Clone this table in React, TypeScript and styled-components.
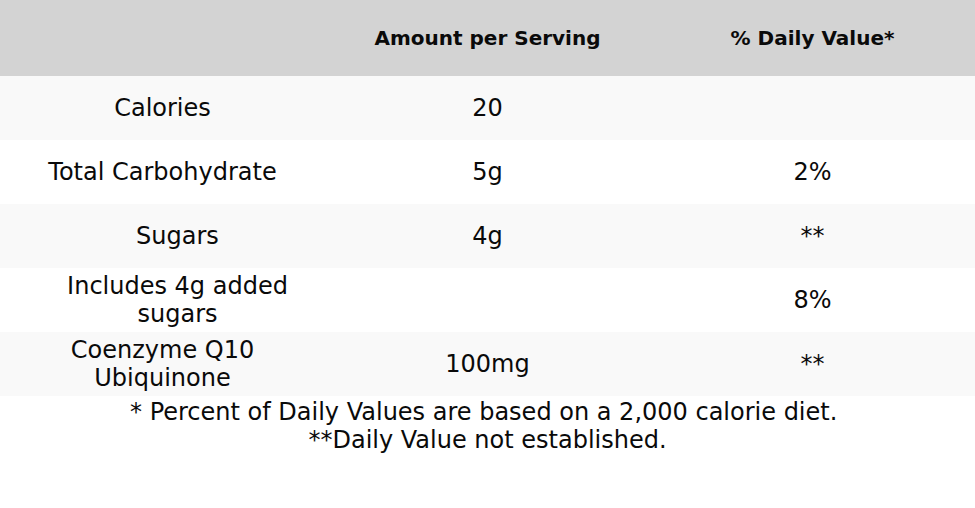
import styled, { createGlobalStyle } from 'styled-components'

const GlobalStyle = createGlobalStyle`
  html, body {
    margin: 0;
    padding: 0;
    background: #ffffff;
  }
  body {
    font-family: 'DejaVu Sans', 'Liberation Sans', sans-serif;
    color: #0a0a0a;
  }
`

const Table = styled.table`
  width: 975px;
  border-collapse: collapse;
  table-layout: fixed;
`

const HeadCell = styled.th`
  height: 76px;
  padding: 0 8px;
  background: #d3d3d3;
  font-size: 20px;
  font-weight: 700;
  text-align: center;
  vertical-align: middle;
`

const Row = styled.tr<{ $shaded: boolean }>`
  height: 64px;
  background: ${({ $shaded }) => ($shaded ? '#f9f9f9' : '#ffffff')};
`

const Cell = styled.td<{ $indent?: boolean }>`
  padding: 0 8px 0 ${({ $indent }) => ($indent ? '38px' : '8px')};
  font-size: 24px;
  line-height: 28px;
  text-align: center;
  vertical-align: middle;
`

const Footnotes = styled.div`
  padding-top: 2px;
  font-size: 24px;
  line-height: 28px;
  text-align: center;
`

type Nutrient = {
  name: string
  amount: string
  daily: string
  indent?: boolean
}

const NUTRIENTS: Nutrient[] = [
  { name: 'Calories', amount: '20', daily: '' },
  { name: 'Total Carbohydrate', amount: '5g', daily: '2%' },
  { name: 'Sugars', amount: '4g', daily: '**', indent: true },
  { name: 'Includes 4g added sugars', amount: '', daily: '8%', indent: true },
  { name: 'Coenzyme Q10 Ubiquinone', amount: '100mg', daily: '**' },
]

export default function App() {
  return (
    <>
      <GlobalStyle />
      <Table>
        <thead>
          <tr>
            <HeadCell />
            <HeadCell>Amount per Serving</HeadCell>
            <HeadCell>% Daily Value*</HeadCell>
          </tr>
        </thead>
        <tbody>
          {NUTRIENTS.map((n, i) => (
            <Row key={n.name} $shaded={i % 2 === 0}>
              <Cell $indent={n.indent}>{n.name}</Cell>
              <Cell>{n.amount}</Cell>
              <Cell>{n.daily}</Cell>
            </Row>
          ))}
        </tbody>
      </Table>
      <Footnotes>
        * Percent of Daily Values are based on a 2,000 calorie diet.{'\u00a0'}
        <br />
        **Daily Value not established.
      </Footnotes>
    </>
  )
}
